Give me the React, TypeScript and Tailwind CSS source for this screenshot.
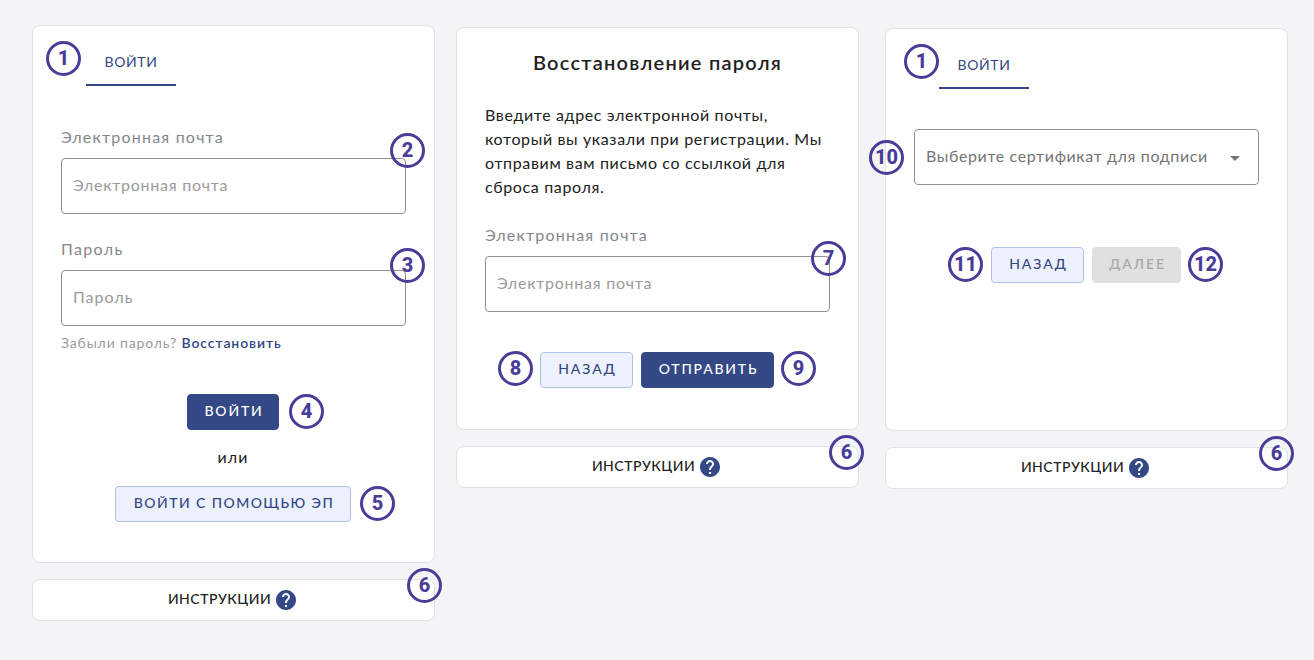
import type { ReactNode } from "react";
import { MdArrowDropDown, MdHelp } from "react-icons/md";

function Badge({ n, className }: { n: number; className: string }) {
  return (
    <span
      className={`absolute z-10 flex size-[35px] items-center justify-center rounded-full border-3 border-[#483d98] pb-px font-['Roboto',sans-serif] text-[20px] leading-none font-extrabold text-[#483d98] ${className}`}
    >
      {n}
    </span>
  );
}

function Card({ className, children }: { className: string; children: ReactNode }) {
  return (
    <section className={`relative flex flex-col rounded-lg border border-[#dfe1e3] bg-white px-7 ${className}`}>
      {children}
    </section>
  );
}

function Instructions({ badge }: { badge: string }) {
  return (
    <div className="relative mt-4 flex h-[42px] items-center justify-center rounded-lg border border-[#dfe1e3] bg-white pr-px">
      <span className="pb-0.5 text-sm font-medium tracking-[0.5px] text-[#212121]">ИНСТРУКЦИИ</span>
      <MdHelp className="ml-[3px] size-6 text-[#334885]" />
      <Badge n={6} className={badge} />
    </div>
  );
}

function LoginTab({ className }: { className: string }) {
  return (
    <div
      className={`ml-[25px] flex w-[90px] items-center justify-center border-b-2 border-[#334885] text-sm tracking-[0.6px] text-[#334885] ${className}`}
    >
      ВОЙТИ
    </div>
  );
}

const buttonStyles = {
  primary: "border-[#334885] bg-[#334885] text-white",
  outline: "border-[#b3c0e6] bg-[#edf1fd] text-[#334885]",
  disabled: "border-[#e0e0e0] bg-[#e0e0e0] text-[#a6a6a6]",
};

function Button({
  kind,
  className,
  children,
}: {
  kind: keyof typeof buttonStyles;
  className: string;
  children: ReactNode;
}) {
  return (
    <button
      type="button"
      disabled={kind === "disabled"}
      className={`flex h-9 items-center justify-center rounded border pb-0.5 pl-0.5 text-sm font-medium whitespace-nowrap ${buttonStyles[kind]} ${className}`}
    >
      {children}
    </button>
  );
}

function Field({ label, labelClass, inputClass }: { label: string; labelClass: string; inputClass: string }) {
  return (
    <label className="flex flex-col">
      <span className={`h-6 text-base leading-[22px] text-[#85878c] ${labelClass}`}>{label}</span>
      <input
        placeholder={label}
        className={`mt-2 h-14 rounded border border-[#919191] bg-transparent pr-3 pb-1 pl-[11px] text-base placeholder:text-[#9b9b9b] ${inputClass}`}
      />
    </label>
  );
}

export default function App() {
  return (
    <main className="flex h-[660px] w-[1314px] items-start bg-[#f3f4f6] pl-8 font-['Lato','Open_Sans',sans-serif]">
      <div className="mt-[25px] w-[403px]">
        <Card className="h-[538px]">
          <Badge n={1} className="top-[15px] left-[13px]" />
          <LoginTab className="mt-3 h-12 pt-px" />
          <div className="mt-10">
            <Field label="Электронная почта" labelClass="tracking-[1.2px]" inputClass="tracking-[0.75px]" />
          </div>
          <Badge n={2} className="top-[107px] left-[357px]" />
          <div className="mt-6">
            <Field label="Пароль" labelClass="tracking-[1.35px]" inputClass="tracking-[1px]" />
          </div>
          <Badge n={3} className="top-[222px] left-[357px]" />
          <p className="mt-[7px] h-5 text-sm leading-5 tracking-[0.85px] text-[#9b9b9b]">
            Забыли пароль?{" "}
            <a className="font-semibold tracking-[0.9px] text-[#334885]">Восстановить</a>
          </p>
          <div className="mt-[41px] flex flex-col items-center pr-px">
            <Button kind="primary" className="w-[92px] tracking-[1.8px]">ВОЙТИ</Button>
            <span className="mt-[15px] text-base leading-6 tracking-[1px] text-[#212121]">или</span>
            <Button kind="outline" className="mt-[17px] w-[236px] tracking-[1.43px]">ВОЙТИ С ПОМОЩЬЮ ЭП</Button>
          </div>
          <Badge n={4} className="top-[368px] left-[256px]" />
          <Badge n={5} className="top-[460px] left-[327px]" />
        </Card>
        <Instructions badge="-top-3 left-[374px]" />
      </div>

      <div className="mt-[27px] ml-[21px] w-[403px]">
        <Card className="h-[403px]">
          <h1 className="mt-[19px] text-center text-xl leading-[30px] font-semibold tracking-[1.25px] text-[#212121]">
            Восстановление пароля
          </h1>
          <p className="mt-[26px] text-base leading-6 tracking-[0.64px] whitespace-nowrap text-[#212121]">
            Введите адрес электронной почты,
            <br />
            который вы указали при регистрации. Мы
            <br />
            отправим вам письмо со ссылкой для
            <br />
            сброса пароля.
          </p>
          <div className="mt-[25px]">
            <Field label="Электронная почта" labelClass="tracking-[1.2px]" inputClass="tracking-[0.75px]" />
          </div>
          <Badge n={7} className="top-[213px] left-[354px]" />
          <div className="mt-10 flex justify-center gap-2 pr-px">
            <Button kind="outline" className="w-[93px] tracking-[1.9px]">НАЗАД</Button>
            <Button kind="primary" className="w-[133px] tracking-[1.8px]">ОТПРАВИТЬ</Button>
          </div>
          <Badge n={8} className="top-[323px] left-[41px]" />
          <Badge n={9} className="top-[323px] left-[324px]" />
        </Card>
        <Instructions badge="-top-3 left-[372px]" />
      </div>

      <div className="mt-7 ml-[26px] w-[403px]">
        <Card className="h-[403px]">
          <Badge n={1} className="top-[15px] left-[18px]" />
          <LoginTab className="mt-3 h-12 pt-px" />
          <div className="mt-10 flex h-14 items-center justify-between rounded border border-[#919191] pr-[11px] pl-[11px]">
            <span className="pb-0.5 text-base tracking-[0.62px] whitespace-nowrap text-[#757575]">
              Выберите сертификат для подписи
            </span>
            <MdArrowDropDown className="mt-0.5 size-6 text-[#757575]" />
          </div>
          <Badge n={10} className="top-[111px] left-[-17px]" />
          <div className="mt-[62px] flex justify-center gap-2 pr-px">
            <Button kind="outline" className="w-[93px] tracking-[1.9px]">НАЗАД</Button>
            <Button kind="disabled" className="w-[89px] tracking-[1.9px]">ДАЛЕЕ</Button>
          </div>
          <Badge n={11} className="top-[218px] left-[62px]" />
          <Badge n={12} className="top-[218px] left-[302px]" />
        </Card>
        <Instructions badge="-top-3 left-[373px]" />
      </div>
    </main>
  );
}
